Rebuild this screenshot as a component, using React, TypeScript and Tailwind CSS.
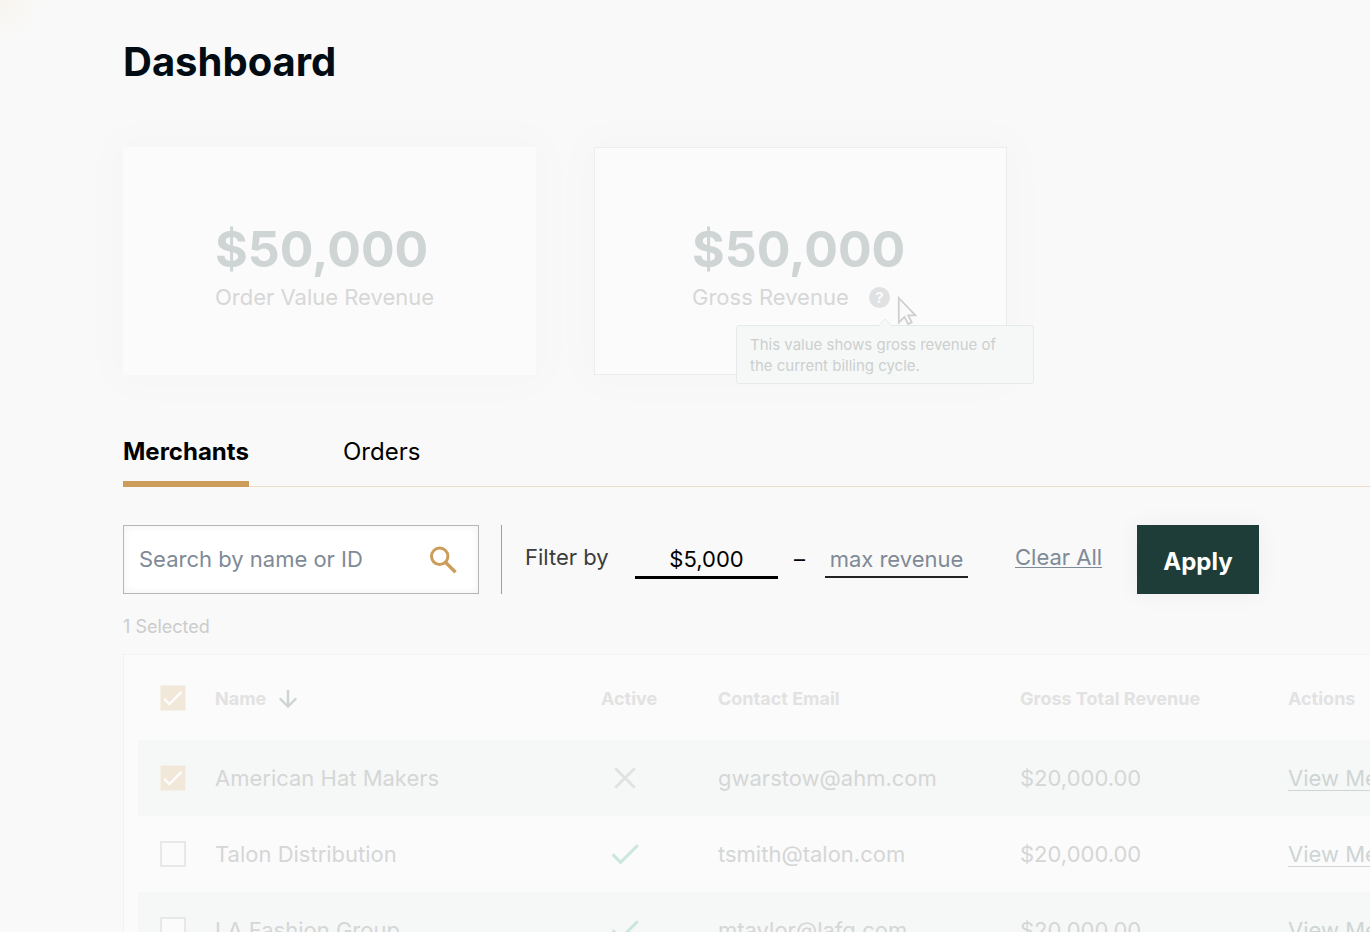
import { useState } from "react";

type Merchant = {
  name: string;
  active: boolean;
  email: string;
  revenue: string;
};

const MERCHANTS: Merchant[] = [
  { name: "American Hat Makers", active: false, email: "gwarstow@ahm.com", revenue: "$20,000.00" },
  { name: "Talon Distribution", active: true, email: "tsmith@talon.com", revenue: "$20,000.00" },
  { name: "LA Fashion Group", active: true, email: "mtaylor@lafg.com", revenue: "$20,000.00" },
];

function SearchIcon() {
  return (
    <svg width="28" height="28" viewBox="0 0 28 28" fill="none" stroke="#cc9d5a" strokeWidth="3" aria-hidden="true">
      <circle cx="10.7" cy="10.3" r="8.2" />
      <path d="M16.5 16.2l10 10" strokeWidth="3.4" />
    </svg>
  );
}

function ArrowDownIcon() {
  return (
    <svg width="20" height="20" viewBox="0 0 20 20" fill="none" stroke="#ced5d4" strokeWidth="2.4" aria-hidden="true">
      <path d="M10 1v16.5M1.8 9.3l8.2 8.2 8.2-8.2" />
    </svg>
  );
}

function ActiveIcon({ active }: { active: boolean }) {
  if (!active) {
    return (
      <svg width="28" height="22" viewBox="0 0 28 22" fill="none" stroke="#e0e1e3" strokeWidth="2.8" role="img" aria-label="No">
        <path d="M4.2 1.2l19.6 19.6M23.8 1.2L4.2 20.8" />
      </svg>
    );
  }
  return (
    <svg width="28" height="22" viewBox="0 0 28 22" fill="none" stroke="#cbe6da" strokeWidth="3" role="img" aria-label="Yes">
      <path d="M1.6 11.4l8 8L26.8 2.2" />
    </svg>
  );
}

function CursorIcon() {
  return (
    <svg width="20" height="30" viewBox="0 0 20 30" fill="#fafafa" stroke="#cfcfcf" strokeWidth="1.8" aria-hidden="true">
      <path d="M1.8 2v24.5l5.7-5.6 3.6 7.2 3.6-1.8-3.5-6.9h7.2z" />
    </svg>
  );
}

function Checkbox({ label, defaultChecked }: { label: string; defaultChecked?: boolean }) {
  return (
    <span className="relative block size-[26px]">
      <input
        type="checkbox"
        aria-label={label}
        defaultChecked={defaultChecked}
        className="peer block size-full appearance-none border-2 border-[#e8e8e8] bg-[#fbfbfb] checked:border checked:border-[#f5f1e9] checked:bg-[#f1e8da]"
      />
      <svg
        viewBox="0 0 26 26"
        fill="none"
        stroke="#fdfdfd"
        strokeWidth="2.4"
        aria-hidden="true"
        className="pointer-events-none absolute inset-0 hidden size-full peer-checked:block"
      >
        <path d="M4.2 13.8l5.2 5.2L21.6 6.8" />
      </svg>
    </span>
  );
}

function RevenueTooltip() {
  return (
    <div
      role="tooltip"
      className="absolute top-[177px] left-[141px] w-[298px] rounded-[3px] border border-[#e6ebea] bg-[#f6f8f7] px-[13px] pt-2 pb-[7px] text-[15px] leading-[21px] text-[#cccfce]"
    >
      <svg width="16" height="9" viewBox="0 0 16 9" className="absolute -top-2 left-[140px]" aria-hidden="true">
        <path d="M0 9L8 1l8 8" fill="#f6f8f7" stroke="#e6ebea" />
      </svg>
      This value shows gross revenue of
      <br />
      the current billing cycle.
    </div>
  );
}

function StatCards() {
  return (
    <section className="mt-[60px] flex gap-[58px]">
      <div className="h-[228px] w-[413px] shrink-0 bg-[#fbfbfb] pt-[74px] pl-[92px] shadow-[0_0_40px_12px_rgba(0,0,0,0.014)]">
        <p className="text-[50px] leading-[56px] font-bold text-[#ced5d4]">$50,000</p>
        <p className="mt-1 text-[22px] leading-8 text-[#d7d7d7]">Order Value Revenue</p>
      </div>
      <div className="relative h-[228px] w-[413px] shrink-0 border border-[#ebeded] bg-[#fbfbfb] pt-[73px] pl-[97px] shadow-[0_0_40px_12px_rgba(0,0,0,0.014)]">
        <p className="text-[50px] leading-[56px] font-bold text-[#ced5d4]">$50,000</p>
        <div className="mt-1 flex items-center">
          <p className="w-[177px] text-[22px] leading-8 text-[#d7d7d7]">Gross Revenue</p>
          <button
            type="button"
            aria-label="About gross revenue"
            className="flex size-[21px] items-center justify-center rounded-full bg-[#e0e1e3] text-[15px] leading-none font-bold text-[#fbfbfb]"
          >
            ?
          </button>
        </div>
        <RevenueTooltip />
        <div className="absolute top-[148px] left-[302px]">
          <CursorIcon />
        </div>
      </div>
    </section>
  );
}

function Tabs() {
  const [tab, setTab] = useState("merchants");
  return (
    <div role="tablist" className="mt-[52px] flex h-[60px] items-stretch border-b border-[#ecdcc3] text-2xl text-black">
      <button
        type="button"
        role="tab"
        aria-selected={tab === "merchants"}
        onClick={() => setTab("merchants")}
        className="-mb-px w-[126px] border-b-[6px] border-transparent pb-1 text-left font-bold whitespace-nowrap aria-selected:border-[#cc9d5a]"
      >
        Merchants
      </button>
      <button
        type="button"
        role="tab"
        aria-selected={tab === "orders"}
        onClick={() => setTab("orders")}
        className="-mb-px ml-[94px] border-b-[6px] border-transparent pb-1 text-left aria-selected:border-[#cc9d5a]"
      >
        Orders
      </button>
    </div>
  );
}

function FilterBar() {
  return (
    <form className="mt-[38px] flex h-[69px] items-stretch text-[22px]" onSubmit={(e) => e.preventDefault()}>
      <div className="flex w-[356px] shrink-0 items-center border border-[#b4b6b9] bg-white pr-[21px] pl-[15px] shadow-[inset_0_0_8px_rgba(0,0,0,0.06)]">
        <input
          type="search"
          aria-label="Search by name or ID"
          placeholder="Search by name or ID"
          className="min-w-0 flex-1 bg-transparent outline-none placeholder:text-[#7f8a97]"
        />
        <button type="submit" aria-label="Search">
          <SearchIcon />
        </button>
      </div>
      <div className="ml-[22px] w-px shrink-0 bg-[#9a9fa6]" />
      <label htmlFor="min-revenue" className="ml-[23px] w-[110px] shrink-0 self-center pb-1 text-[#3c3c3c]">
        Filter by
      </label>
      <input
        id="min-revenue"
        type="text"
        defaultValue="$5,000"
        className="mt-4 h-[38px] w-[143px] shrink-0 border-b-[3px] border-black bg-transparent text-center text-black outline-none"
      />
      <span className="w-[47px] shrink-0 self-center pr-1 text-center text-black">–</span>
      <input
        type="text"
        aria-label="Maximum revenue"
        placeholder="max revenue"
        className="mt-4 h-[37px] w-[143px] shrink-0 border-b-2 border-[#222] bg-transparent text-center outline-none placeholder:text-[#7f8a97]"
      />
      <a
        href="#clear"
        className="ml-[47px] w-[122px] shrink-0 self-center pb-1 text-[#7f8a97] underline decoration-1 underline-offset-2"
      >
        Clear All
      </a>
      <button
        type="submit"
        className="w-[122px] shrink-0 bg-[#1f3d38] pt-1 text-2xl font-bold text-white shadow-[0_0_24px_rgba(0,0,0,0.05)]"
      >
        Apply
      </button>
    </form>
  );
}

function MerchantTable() {
  return (
    <div className="mt-[14px] w-[1500px] border border-[#f1f2f2] bg-[#fbfbfb] px-[14px]">
      <table className="w-full table-fixed text-left">
        <colgroup>
          <col className="w-[77px]" />
          <col className="w-[386px]" />
          <col className="w-[117px]" />
          <col className="w-[302px]" />
          <col className="w-[268px]" />
          <col />
        </colgroup>
        <thead>
          <tr className="h-[85px] text-lg text-[#e2e2e2]">
            <th scope="col" className="pl-[22px]">
              <Checkbox label="Select all merchants" defaultChecked />
            </th>
            <th scope="col" className="pt-0.5">
              <button type="button" className="flex items-center gap-3 font-bold">
                Name
                <ArrowDownIcon />
              </button>
            </th>
            <th scope="col" className="pt-0.5">Active</th>
            <th scope="col" className="pt-0.5">Contact Email</th>
            <th scope="col" className="pt-0.5">Gross Total Revenue</th>
            <th scope="col" className="pt-0.5">Actions</th>
          </tr>
        </thead>
        <tbody>
          {MERCHANTS.map((merchant, i) => (
            <tr key={merchant.name} className="h-[76px] text-[22px] text-[#d5d6d6] odd:bg-[#f6f8f7]">
              <td className="pl-[22px]">
                <Checkbox label={`Select ${merchant.name}`} defaultChecked={i === 0} />
              </td>
              <td>{merchant.name}</td>
              <td className="pl-[10px]">
                <ActiveIcon active={merchant.active} />
              </td>
              <td>{merchant.email}</td>
              <td>{merchant.revenue}</td>
              <td>
                <a href="#merchant" className="text-[#ced5d4] underline decoration-1 underline-offset-4">
                  View Merchant
                </a>
              </td>
            </tr>
          ))}
        </tbody>
      </table>
    </div>
  );
}

export default function App() {
  return (
    <main className="relative h-screen overflow-hidden bg-[#f9f9f9] pt-[37px] pl-[123px] font-['Inter',sans-serif]">
      <div className="absolute top-0 left-0 size-[42px] bg-[radial-gradient(circle_at_0_0,#f8f5ef,#f9f9f9_42px)]" />
      <h1 className="text-[40px] leading-[50px] font-bold text-[#020c14]">Dashboard</h1>
      <StatCards />
      <Tabs />
      <FilterBar />
      <p className="mt-[19px] text-lg leading-[27px] text-[#cbcccc]">1 Selected</p>
      <MerchantTable />
    </main>
  );
}
